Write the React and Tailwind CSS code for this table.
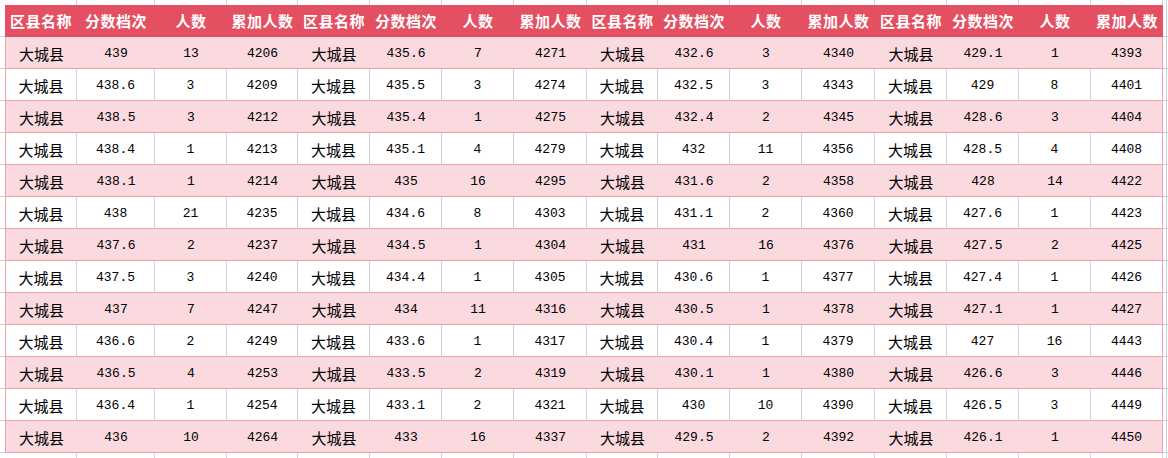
import React from "react";

const groups = [
  [
    ["439", "13", "4206"], ["438.6", "3", "4209"], ["438.5", "3", "4212"], ["438.4", "1", "4213"],
    ["438.1", "1", "4214"], ["438", "21", "4235"], ["437.6", "2", "4237"], ["437.5", "3", "4240"],
    ["437", "7", "4247"], ["436.6", "2", "4249"], ["436.5", "4", "4253"], ["436.4", "1", "4254"],
    ["436", "10", "4264"],
  ],
  [
    ["435.6", "7", "4271"], ["435.5", "3", "4274"], ["435.4", "1", "4275"], ["435.1", "4", "4279"],
    ["435", "16", "4295"], ["434.6", "8", "4303"], ["434.5", "1", "4304"], ["434.4", "1", "4305"],
    ["434", "11", "4316"], ["433.6", "1", "4317"], ["433.5", "2", "4319"], ["433.1", "2", "4321"],
    ["433", "16", "4337"],
  ],
  [
    ["432.6", "3", "4340"], ["432.5", "3", "4343"], ["432.4", "2", "4345"], ["432", "11", "4356"],
    ["431.6", "2", "4358"], ["431.1", "2", "4360"], ["431", "16", "4376"], ["430.6", "1", "4377"],
    ["430.5", "1", "4378"], ["430.4", "1", "4379"], ["430.1", "1", "4380"], ["430", "10", "4390"],
    ["429.5", "2", "4392"],
  ],
  [
    ["429.1", "1", "4393"], ["429", "8", "4401"], ["428.6", "3", "4404"], ["428.5", "4", "4408"],
    ["428", "14", "4422"], ["427.6", "1", "4423"], ["427.5", "2", "4425"], ["427.4", "1", "4426"],
    ["427.1", "1", "4427"], ["427", "16", "4443"], ["426.6", "3", "4446"], ["426.5", "3", "4449"],
    ["426.1", "1", "4450"],
  ],
];

const headers = ["区县名称", "分数档次", "人数", "累加人数"];
const GRID =
  "grid grid-cols-[5px_72px_78px_72px_71px_72px_72px_72px_73px_71px_72px_72px_73px_72px_72px_72px_72px_4px_1fr]";

const cjk = { fontFamily: '"Noto Sans CJK SC", "Noto Sans", sans-serif' };
const mono = { fontFamily: '"Liberation Mono", "DejaVu Sans Mono", monospace' };

function TopStrip() {
  const cells = [];
  for (let i = 0; i < 19; i++) {
    cells.push(
      <div
        key={i}
        className={
          i === 0 || i === 18 ? "h-[5px]" : "h-[5px] border-r border-[#cdd3de]"
        }
      />
    );
  }
  return <div className={GRID}>{cells}</div>;
}

function HeaderRow() {
  const cells = [<div key="l" className="border-b border-[#cdd3de]" />];
  for (let g = 0; g < 4; g++) {
    headers.forEach((h, i) => {
      cells.push(
        <div
          key={`${g}-${i}`}
          className="flex items-center justify-center bg-[#e44f62] text-white font-bold text-[15px] tracking-[0.5px] pt-[1px]"
          style={cjk}
        >
          {h}
        </div>
      );
    });
  }
  cells.push(<div key="r1" className="border-r border-b border-[#cdd3de]" />);
  cells.push(<div key="r2" className="border-b border-[#cdd3de]" />);
  return <div className={`${GRID} h-[32px]`}>{cells}</div>;
}

function DataRow({ r }) {
  const pink = r % 2 === 0;
  const bg = pink ? "bg-[#fad9df]" : "bg-white";
  const cells = [<div key="l" className="border-b border-[#cdd3de]" />];
  for (let g = 0; g < 4; g++) {
    const [score, cnt, cum] = groups[g][r];
    const vals = ["大城县", score, cnt, cum];
    vals.forEach((v, i) => {
      const idx = g * 4 + i;
      let cls = `flex items-center justify-center border-b border-[#eba2ac] ${bg} pt-[3px] text-black`;
      if (idx === 0) cls += " border-l border-l-[#eba2ac]";
      if (idx === 15) cls += " border-r border-r-[#eba2ac]";
      else if (!pink) cls += " border-r border-r-[#cdd3de]";
      cls += i === 0 ? " text-[15px]" : " text-[13px]";
      cells.push(
        <div key={`${g}-${i}`} className={cls} style={i === 0 ? cjk : mono}>
          {v}
        </div>
      );
    });
  }
  cells.push(<div key="r1" className="border-r border-b border-[#cdd3de]" />);
  cells.push(<div key="r2" className="border-b border-[#cdd3de]" />);
  return <div className={`${GRID} h-[32px]`}>{cells}</div>;
}

function BottomStrip() {
  const cells = [];
  for (let i = 0; i < 19; i++) {
    cells.push(
      <div
        key={i}
        className={i === 0 || i === 18 ? "h-[5px]" : "h-[5px] border-r border-[#cdd3de]"}
      />
    );
  }
  return <div className={GRID}>{cells}</div>;
}

export default function App() {
  return (
    <div className="w-[1168px] h-[458px] bg-white overflow-hidden">
      <TopStrip />
      <HeaderRow />
      {Array.from({ length: 13 }, (_, r) => (
        <DataRow key={r} r={r} />
      ))}
      <BottomStrip />
    </div>
  );
}
